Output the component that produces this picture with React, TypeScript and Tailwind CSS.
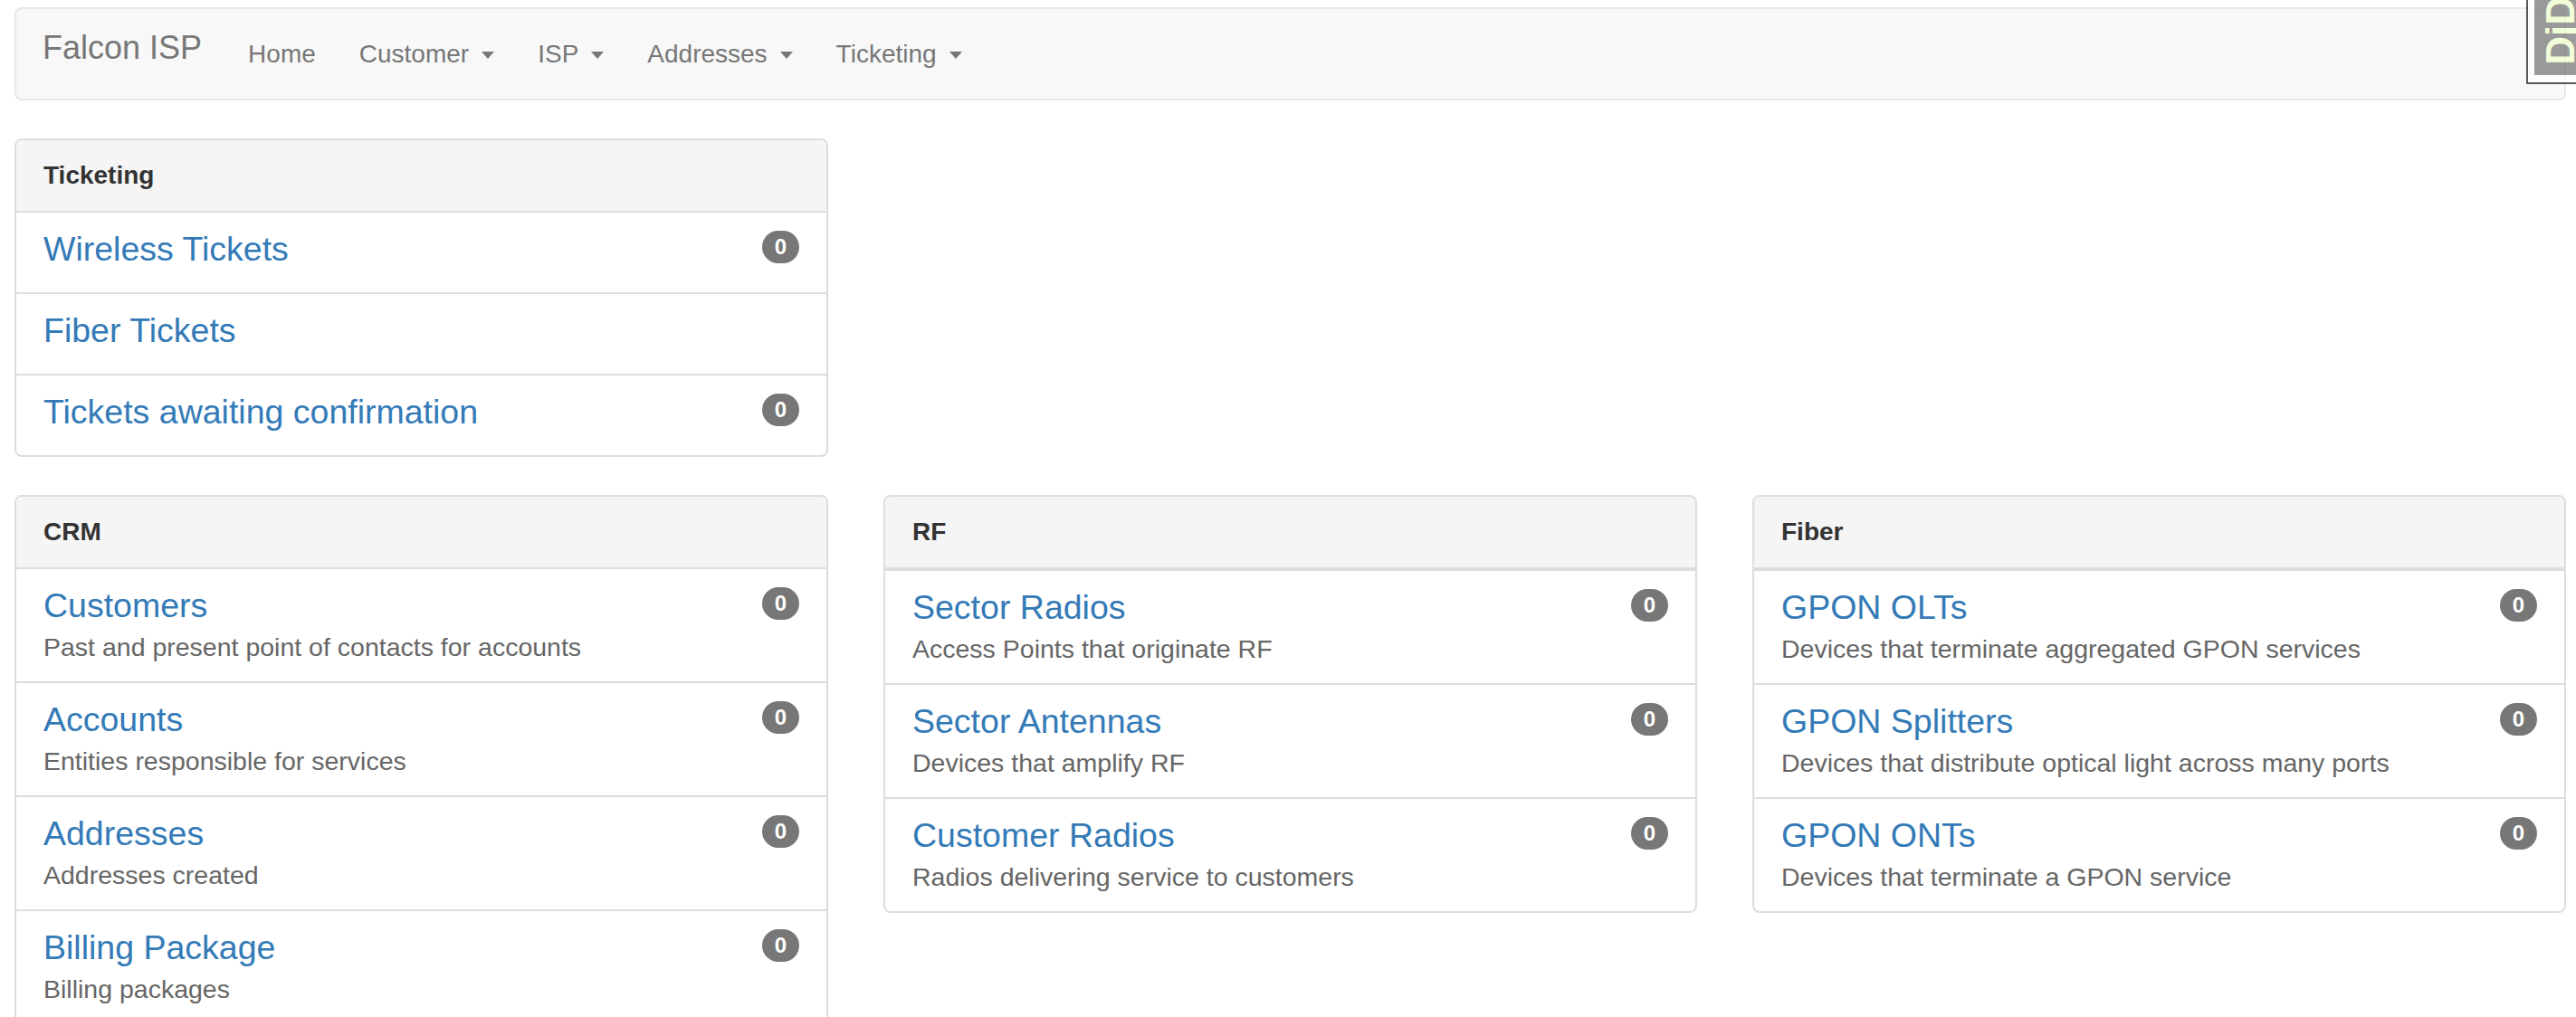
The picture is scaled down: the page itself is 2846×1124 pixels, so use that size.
import React from 'react';

type Item = { title: string; desc?: string; count?: number };

const ticketing: Item[] = [
  { title: 'Wireless Tickets', count: 0 },
  { title: 'Fiber Tickets' },
  { title: 'Tickets awaiting confirmation', count: 0 },
];

const crm: Item[] = [
  { title: 'Customers', desc: 'Past and present point of contacts for accounts', count: 0 },
  { title: 'Accounts', desc: 'Entities responsible for services', count: 0 },
  { title: 'Addresses', desc: 'Addresses created', count: 0 },
  { title: 'Billing Package', desc: 'Billing packages', count: 0 },
];

const rf: Item[] = [
  { title: 'Sector Radios', desc: 'Access Points that originate RF', count: 0 },
  { title: 'Sector Antennas', desc: 'Devices that amplify RF', count: 0 },
  { title: 'Customer Radios', desc: 'Radios delivering service to customers', count: 0 },
];

const fiber: Item[] = [
  { title: 'GPON OLTs', desc: 'Devices that terminate aggregated GPON services', count: 0 },
  { title: 'GPON Splitters', desc: 'Devices that distribute optical light across many ports', count: 0 },
  { title: 'GPON ONTs', desc: 'Devices that terminate a GPON service', count: 0 },
];

const navItems = [
  { label: 'Home', caret: false },
  { label: 'Customer', caret: true },
  { label: 'ISP', caret: true },
  { label: 'Addresses', caret: true },
  { label: 'Ticketing', caret: true },
];

const Badge: React.FC<{ n: number }> = ({ n }) => (
  <span className="shrink-0 rounded-full bg-[#777] px-[14px] h-[36px] leading-[36px] text-[24px] font-bold text-white">
    {n}
  </span>
);

const Row: React.FC<{ item: Item; first: boolean }> = ({ item, first }) => (
  <div
    className={
      first
        ? 'flex items-start justify-between px-[30px] py-[20px]'
        : 'flex items-start justify-between px-[30px] py-[20px] border-t-2 border-[#ddd]'
    }
  >
    <div>
      <div className="mb-[8px] text-[37.5px] leading-[40px] text-[#337ab7]">{item.title}</div>
      {item.desc && <div className="text-[28.5px] leading-[36px] text-[#666]">{item.desc}</div>}
    </div>
    {item.count !== undefined && <Badge n={item.count} />}
  </div>
);

const Panel: React.FC<{ title: string; items: Item[]; thick?: boolean }> = ({ title, items, thick }) => (
  <div className="border-2 border-[#ddd] rounded-[8px] overflow-hidden bg-white">
    <div
      className={
        thick
          ? 'h-[82px] flex items-center px-[30px] bg-[#f5f5f5] border-b-[4px] border-[#ddd]'
          : 'h-[80px] flex items-center px-[30px] bg-[#f5f5f5] border-b-2 border-[#ddd]'
      }
    >
      <span className="text-[28px] leading-[40px] font-bold text-[#333]">{title}</span>
    </div>
    {items.map((it, i) => (
      <Row key={it.title} item={it} first={i === 0} />
    ))}
  </div>
);

export default function App() {
  return (
    <div className="relative w-full min-h-screen overflow-hidden bg-white font-['Liberation_Sans',Arial,sans-serif] pl-[16px] pr-[11px] pt-[8px]">
      {/* navbar */}
      <nav className="h-[103px] flex items-center border-2 border-[#e7e7e7] rounded-[8px] bg-[#f8f8f8] pl-[29px]">
        <span className="text-[36px] leading-[40px] text-[#777] pb-[13px] mr-[51px]">Falcon ISP</span>
        <div className="flex items-center gap-[48px]">
          {navItems.map((n) => (
            <div key={n.label} className="flex items-center text-[28px] leading-[40px] text-[#777]">
              <span>{n.label}</span>
              {n.caret && (
                <span className="ml-[14px] mt-[2px] w-0 h-0 border-x-[7px] border-x-transparent border-t-[8px] border-t-[#777]" />
              )}
            </div>
          ))}
        </div>
      </nav>

      <div className="grid grid-cols-3 gap-x-[61px] mt-[42px]">
        <Panel title="Ticketing" items={ticketing} />
      </div>

      <div className="grid grid-cols-3 gap-x-[61px] mt-[42px] items-start">
        <Panel title="CRM" items={crm} />
        <Panel title="RF" items={rf} thick />
        <Panel title="Fiber" items={fiber} thick />
      </div>

      {/* debug toolbar handle */}
      <div className="absolute top-0 right-0 w-[55px] h-[93px] border-l-2 border-b-2 border-[#222] bg-white pl-[7px] pb-[8px] opacity-[0.75]">
        <div className="relative w-full h-full bg-[#7a7a7a] overflow-hidden">
          <span className="absolute left-[7px] bottom-[11px] [writing-mode:vertical-rl] rotate-180 text-[44px] leading-[44px] font-bold text-[#eeffcc]">
            DjDT
          </span>
        </div>
      </div>
    </div>
  );
}
